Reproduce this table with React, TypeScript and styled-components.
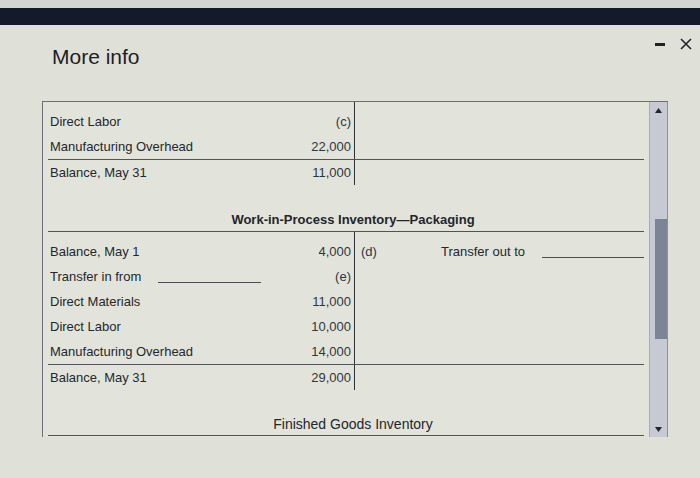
import React from "react";
import styled, {createGlobalStyle} from "styled-components";

const GlobalStyle = createGlobalStyle`
    body {
        margin: 0;
        background: #dfe1d9;
        font-family: "Liberation Sans", Arial, sans-serif;
        color: #24272d;
    }
`;

const Page = styled.div`
    width: 700px;
    height: 478px;
    overflow: hidden;
    background: #dfe1d9;
`;

const TopStrip = styled.div`
    height: 8px;
    background: #d3d5d2;
`;

const TitleBar = styled.div`
    height: 17px;
    background: #151a2b;
`;

const Header = styled.div`
    height: 76px;
    box-sizing: border-box;
    display: flex;
    justify-content: space-between;
    align-items: flex-start;
    padding: 13px 8px 0 52px;
`;

const DialogTitle = styled.h1`
    margin: 7px 0 0;
    font-size: 21px;
    line-height: 24px;
    font-weight: 400;
    color: #1b1e24;
`;

const Controls = styled.div`
    display: flex;
    align-items: center;
    gap: 15px;
    height: 12px;
`;

const Minimize = styled.div`
    width: 10px;
    height: 3px;
    background: #1f2228;
`;

const Panel = styled.div`
    margin-left: 42px;
    width: 626px;
    height: 336px;
    box-sizing: border-box;
    border-top: 1px solid #6b6e75;
    border-left: 1px solid #6b6e75;
    display: flex;
    overflow: hidden;
`;

const Content = styled.div`
    flex: 1;
    padding: 0 5px 0 5px;
    background: #e2e4dc;
`;

const Row = styled.div<{ $h?: number; $rule?: boolean }>`
    display: grid;
    grid-template-columns: 307px 1fr;
    height: ${p => p.$h ?? 25}px;
    border-top: ${p => (p.$rule ? "1px solid #505359" : "none")};
    font-size: 13px;
`;

const Debit = styled.div`
    border-right: 1px solid #2f3238;
    display: flex;
    align-items: center;
    justify-content: space-between;
    padding: 0 3px 0 2px;
`;

const Credit = styled.div`
    display: flex;
    align-items: center;
    padding-left: 6px;
`;

const Label = styled.span`
    display: flex;
    align-items: center;
    color: #24272d;
`;

const Amount = styled.span<{ $w?: number }>`
    color: #30343b;
    width: ${p => (p.$w ? `${p.$w}px` : "auto")};
`;

const Blank = styled.span<{ $w?: number }>`
    display: inline-block;
    width: ${p => (p.$w ? `${p.$w}px` : "auto")};
    flex: ${p => (p.$w ? "none" : "1")};
    height: 0;
    margin: 12px 0 0 17px;
    border-bottom: 1px solid #4a4d53;
`;

const Gap = styled.div<{ $h: number }>`
    height: ${p => p.$h}px;
`;

const AccountTitle = styled.div<{ $bold?: boolean }>`
    height: 24px;
    box-sizing: border-box;
    display: flex;
    align-items: center;
    justify-content: center;
    padding-left: 14px;
    border-bottom: 1px solid #505359;
    font-size: ${p => (p.$bold ? 13 : 14)}px;
    font-weight: ${p => (p.$bold ? 700 : 400)};
    color: #22252b;
`;

const Scrollbar = styled.div`
    width: 17px;
    display: flex;
    flex-direction: column;
    background: #c7cad2;
    border-left: 1px solid #a9acb5;
    border-right: 1px solid #8d909a;
`;

const ArrowButton = styled.div`
    height: 16px;
    display: flex;
    align-items: center;
    justify-content: center;
`;

const Track = styled.div`
    flex: 1;
    display: flex;
    flex-direction: column;
`;

const Thumb = styled.div`
    height: 120px;
    margin: 0 0 0 5px;
    background: #7c8496;
`;

function Arrow({down}: { down?: boolean }) {
    return (
        <svg width="7" height="5" viewBox="0 0 7 5">
            <path d={down ? "M0 0 L7 0 L3.5 5 Z" : "M0 5 L7 5 L3.5 0 Z"} fill="#22252b"/>
        </svg>
    );
}

function CloseIcon() {
    return (
        <svg width="12" height="12" viewBox="0 0 12 12">
            <path d="M1 1 L11 11 M11 1 L1 11" stroke="#22252b" strokeWidth="1.6" fill="none"/>
        </svg>
    );
}

type Entry = { label: React.ReactNode; amount: string; rule?: boolean };

const laborRows: Entry[] = [
    {label: "Direct Labor", amount: "(c)"},
    {label: "Manufacturing Overhead", amount: "22,000"},
    {label: "Balance, May 31", amount: "11,000", rule: true},
];

const packagingRows: Entry[] = [
    {label: <>Transfer in from<Blank $w={103}/></>, amount: "(e)"},
    {label: "Direct Materials", amount: "11,000"},
    {label: "Direct Labor", amount: "10,000"},
    {label: "Manufacturing Overhead", amount: "14,000"},
    {label: "Balance, May 31", amount: "29,000", rule: true},
];

function EntryRow({entry}: { entry: Entry }) {
    return (
        <Row $rule={entry.rule}>
            <Debit>
                <Label>{entry.label}</Label>
                <Amount>{entry.amount}</Amount>
            </Debit>
            <Credit/>
        </Row>
    );
}

function App() {
    return (
        <Page>
            <GlobalStyle/>
            <TopStrip/>
            <TitleBar/>
            <Header>
                <DialogTitle>More info</DialogTitle>
                <Controls>
                    <Minimize/>
                    <CloseIcon/>
                </Controls>
            </Header>
            <Panel>
                <Content>
                    <Row $h={7}><Debit/><Credit/></Row>
                    {laborRows.map((r, i) => <EntryRow key={i} entry={r}/>)}

                    <Gap $h={23}/>
                    <AccountTitle $bold>Work-in-Process Inventory—Packaging</AccountTitle>
                    <Row $h={7}><Debit/><Credit/></Row>
                    <Row>
                        <Debit>
                            <Label>Balance, May 1</Label>
                            <Amount>4,000</Amount>
                        </Debit>
                        <Credit>
                            <Amount $w={80}>(d)</Amount>
                            <Label>Transfer out to</Label>
                            <Blank/>
                        </Credit>
                    </Row>
                    {packagingRows.map((r, i) => <EntryRow key={i} entry={r}/>)}

                    <Gap $h={22}/>
                    <AccountTitle>Finished Goods Inventory</AccountTitle>
                </Content>
                <Scrollbar>
                    <ArrowButton><Arrow/></ArrowButton>
                    <Track>
                        <Gap $h={101}/>
                        <Thumb/>
                    </Track>
                    <ArrowButton><Arrow down/></ArrowButton>
                </Scrollbar>
            </Panel>
        </Page>
    );
}

export default App;
